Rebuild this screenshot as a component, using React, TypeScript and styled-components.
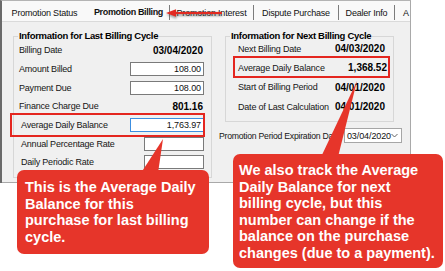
import React from 'react';
import styled, { createGlobalStyle } from 'styled-components';

const Global = createGlobalStyle`
  html, body { margin: 0; padding: 0; background: #ffffff; }
  body { font-family: "Liberation Sans", Arial, sans-serif; }
  * { box-sizing: border-box; }
`;

const RED = '#e6352a';

const Stage = styled.div`
  position: relative;
  width: 445px;
  height: 271px;
  overflow: hidden;
  background: #ffffff;
`;

const Window = styled.div`
  width: 411px;
  height: 183px;
  display: flex;
  flex-direction: column;
  border-left: 2px solid #6a6a6a;
  border-right: 1px solid #a9a9a9;
  border-top: 1px solid #b4b4b4;
`;

const TabStrip = styled.div`
  height: 20px;
  display: flex;
  align-items: flex-end;
  background: #f9f9f9;
  overflow: hidden;
`;

const Tab = styled.div<{ $w: number; $sep?: boolean; $active?: boolean }>`
  flex: 0 0 ${(p) => p.$w}px;
  height: 15px;
  margin-bottom: 1px;
  display: flex;
  align-items: center;
  justify-content: ${(p) => (p.$w < 30 ? 'flex-start' : 'center')};
  padding-left: ${(p) => (p.$w < 30 ? '8px' : '0')};
  padding-bottom: ${(p) => (p.$active ? '2px' : '0')};
  border-right: ${(p) => (p.$sep ? '1px solid #7c7c7c' : '1px solid transparent')};
  font-size: 9px;
  letter-spacing: ${(p) => (p.$active ? '-0.35px' : '-0.2px')};
  font-weight: ${(p) => (p.$active ? 700 : 400)};
  color: #111;
  white-space: nowrap;
`;

const Panel = styled.div`
  flex: 1;
  display: flex;
  align-items: flex-start;
  background: #f0f0f0;
  border-top: 1px solid #dadada;
  border-bottom: 1px solid #a9a9a9;
  padding: 9px 0 0 11px;
`;

const Group = styled.fieldset<{ $w: number; $ml?: number; $pb: number }>`
  width: ${(p) => p.$w}px;
  margin: 0 0 0 ${(p) => p.$ml ?? 0}px;
  padding: 0 0 ${(p) => p.$pb}px 0;
  border: 1px solid #d7d7d7;
  min-inline-size: 0;
`;

const Legend = styled.legend`
  margin-left: 4px;
  padding: 0 1px;
  font-size: 9.5px;
  line-height: 10px;
  font-weight: 700;
  letter-spacing: -0.3px;
  color: #000;
  white-space: nowrap;
`;

const Rows = styled.div<{ $mt: number }>`
  display: flex;
  flex-direction: column;
  margin-top: ${(p) => p.$mt}px;
`;

type HL = { t: number; l: number; r: number; b: number };

const Row = styled.div<{ $h: number; $pl: number; $pr: number; $hl?: HL }>`
  position: relative;
  height: ${(p) => p.$h}px;
  display: flex;
  align-items: center;
  justify-content: space-between;
  padding: 0 ${(p) => p.$pr}px 0 ${(p) => p.$pl}px;
  ${(p) =>
    p.$hl
      ? `&::after {
    content: '';
    position: absolute;
    top: ${p.$hl.t}px;
    left: ${p.$hl.l}px;
    right: ${p.$hl.r}px;
    bottom: ${p.$hl.b}px;
    border: 2px solid #e4261f;
    pointer-events: none;
  }`
      : ''}
`;

const Label = styled.span<{ $indent?: number }>`
  font-size: 9px;
  letter-spacing: -0.2px;
  color: #151515;
  white-space: nowrap;
  padding-left: ${(p) => p.$indent ?? 0}px;
`;

const Value = styled.span`
  font-size: 10px;
  font-weight: 700;
  color: #000;
  white-space: nowrap;
`;

const Input = styled.div<{ $w: number; $focus?: boolean }>`
  width: ${(p) => p.$w}px;
  height: 14px;
  border: 1px solid ${(p) => (p.$focus ? '#3c8ee0' : '#7a7a7a')};
  background: #ffffff;
  display: flex;
  align-items: center;
  justify-content: flex-end;
  padding: 0 2px;
  font-size: 9px;
  letter-spacing: -0.1px;
  color: #111;
`;

const RightCol = styled.div`
  width: 183px;
  margin-left: 7px;
  display: flex;
  flex-direction: column;
`;

const ExpiryRow = styled.div`
  margin-top: 6px;
  height: 15px;
  display: flex;
  align-items: center;
  justify-content: space-between;
`;

const ExpiryLabel = styled(Label)`
  flex: 0 0 auto;
  font-size: 8.7px;
  letter-spacing: -0.25px;
`;

const Combo = styled.div`
  flex: 0 0 58px;
  height: 15px;
  border: 1px solid #a6a6a6;
  background: #ffffff;
  display: flex;
  align-items: center;
  justify-content: space-between;
  padding: 0 3px 0 2px;
  font-size: 9px;
  letter-spacing: -0.1px;
  color: #111;
`;

const Callout = styled.div<{ $x: number; $y: number; $w: number; $h: number; $pt: number; $pl: number }>`
  position: absolute;
  left: ${(p) => p.$x}px;
  top: ${(p) => p.$y}px;
  width: ${(p) => p.$w}px;
  height: ${(p) => p.$h}px;
  padding: ${(p) => p.$pt}px 0 0 ${(p) => p.$pl}px;
  background: ${RED};
  border-radius: 7px;
  color: #ffffff;
  font-size: 14.5px;
  line-height: 16.5px;
  font-weight: 700;
  white-space: nowrap;
`;

const Overlay = styled.svg`
  position: absolute;
  left: 0;
  top: 0;
  pointer-events: none;
`;

const Chevron = () => (
  <svg width="7" height="5" viewBox="0 0 7 5">
    <polyline points="0.5,1 3.5,4 6.5,1" fill="none" stroke="#555" strokeWidth="0.9" />
  </svg>
);

const LH = 18.7;
const RH = 19.3;

export default function App() {
  return (
    <Stage>
      <Global />
      <Window>
        <TabStrip>
          <Tab $w={86}>Promotion Status</Tab>
          <Tab $w={82} $sep $active>Promotion Billing</Tab>
          <Tab $w={84} $sep>Promotion Interest</Tab>
          <Tab $w={85} $sep>Dispute Purchase</Tab>
          <Tab $w={56} $sep>Dealer Info</Tab>
          <Tab $w={20}>A</Tab>
        </TabStrip>
        <Panel>
          <Group $w={199} $pb={5}>
            <Legend>Information for Last Billing Cycle</Legend>
            <Rows $mt={0}>
              <Row $h={LH} $pl={5} $pr={8}>
                <Label>Billing Date</Label>
                <Value>03/04/2020</Value>
              </Row>
              <Row $h={LH} $pl={5} $pr={7}>
                <Label>Amount Billed</Label>
                <Input $w={74}>108.00</Input>
              </Row>
              <Row $h={LH} $pl={5} $pr={7}>
                <Label>Payment Due</Label>
                <Input $w={74}>108.00</Input>
              </Row>
              <Row $h={LH} $pl={5} $pr={8}>
                <Label>Finance Charge Due</Label>
                <Value>801.16</Value>
              </Row>
              <Row $h={LH} $pl={5} $pr={7} $hl={{ t: -2.5, l: -4, r: 6, b: -3 }}>
                <Label $indent={2}>Average Daily Balance</Label>
                <Input $w={74} $focus>1,763.97</Input>
              </Row>
              <Row $h={LH} $pl={5} $pr={7}>
                <Label $indent={2}>Annual Percentage Rate</Label>
                <Input $w={60} />
              </Row>
              <Row $h={LH} $pl={5} $pr={7}>
                <Label $indent={2}>Daily Periodic Rate</Label>
                <Input $w={60} />
              </Row>
            </Rows>
          </Group>
          <RightCol>
            <Group $w={169} $ml={6} $pb={5}>
              <Legend>Information for Next Billing Cycle</Legend>
              <Rows $mt={-2}>
                <Row $h={RH} $pl={12} $pr={8}>
                  <Label>Next Billing Date</Label>
                  <Value>04/03/2020</Value>
                </Row>
                <Row $h={RH} $pl={12} $pr={6} $hl={{ t: -2.3, l: 7, r: 3, b: 0 }}>
                  <Label>Average Daily Balance</Label>
                  <Value>1,368.52</Value>
                </Row>
                <Row $h={RH} $pl={12} $pr={8}>
                  <Label>Start of Billing Period</Label>
                  <Value>04/01/2020</Value>
                </Row>
                <Row $h={RH} $pl={12} $pr={8}>
                  <Label>Date of Last Calculation</Label>
                  <Value>04/01/2020</Value>
                </Row>
              </Rows>
            </Group>
            <ExpiryRow>
              <ExpiryLabel>Promotion Period Expiration Date</ExpiryLabel>
              <Combo>
                <span>03/04/2020</span>
                <Chevron />
              </Combo>
            </ExpiryRow>
          </RightCol>
        </Panel>
      </Window>

      <Overlay width="445" height="271" viewBox="0 0 445 271">
        <defs>
          <filter id="sh" x="-20%" y="-50%" width="140%" height="200%">
            <feGaussianBlur stdDeviation="0.8" />
          </filter>
        </defs>
        <g opacity="0.55" filter="url(#sh)" transform="translate(0.5,1.8)">
          <rect x="173" y="12" width="49" height="2.2" fill="#555" />
          <polygon points="166,13 176,9 176,17" fill="#555" />
        </g>
        <rect x="173" y="11.9" width="49" height="2.2" fill="#e22a22" />
        <polygon points="166,13 176,9.2 176,16.8" fill="#e22a22" />
        <polygon points="141,173 158,173 163,139" fill={RED} />
        <polygon points="321,157 338,157 357,81" fill={RED} />
      </Overlay>

      <Callout $x={17} $y={170} $w={192} $h={84} $pt={9} $pl={8}>
        This is the Average Daily
        <br />
        Balance for this
        <br />
        purchase for last billing
        <br />
        cycle.
      </Callout>
      <Callout $x={233} $y={154} $w={210} $h={114} $pt={8} $pl={6}>
        We also track the Average
        <br />
        Daily Balance for next
        <br />
        billing cycle, but this
        <br />
        number can change if the
        <br />
        balance on the purchase
        <br />
        changes (due to a payment).
      </Callout>
    </Stage>
  );
}
